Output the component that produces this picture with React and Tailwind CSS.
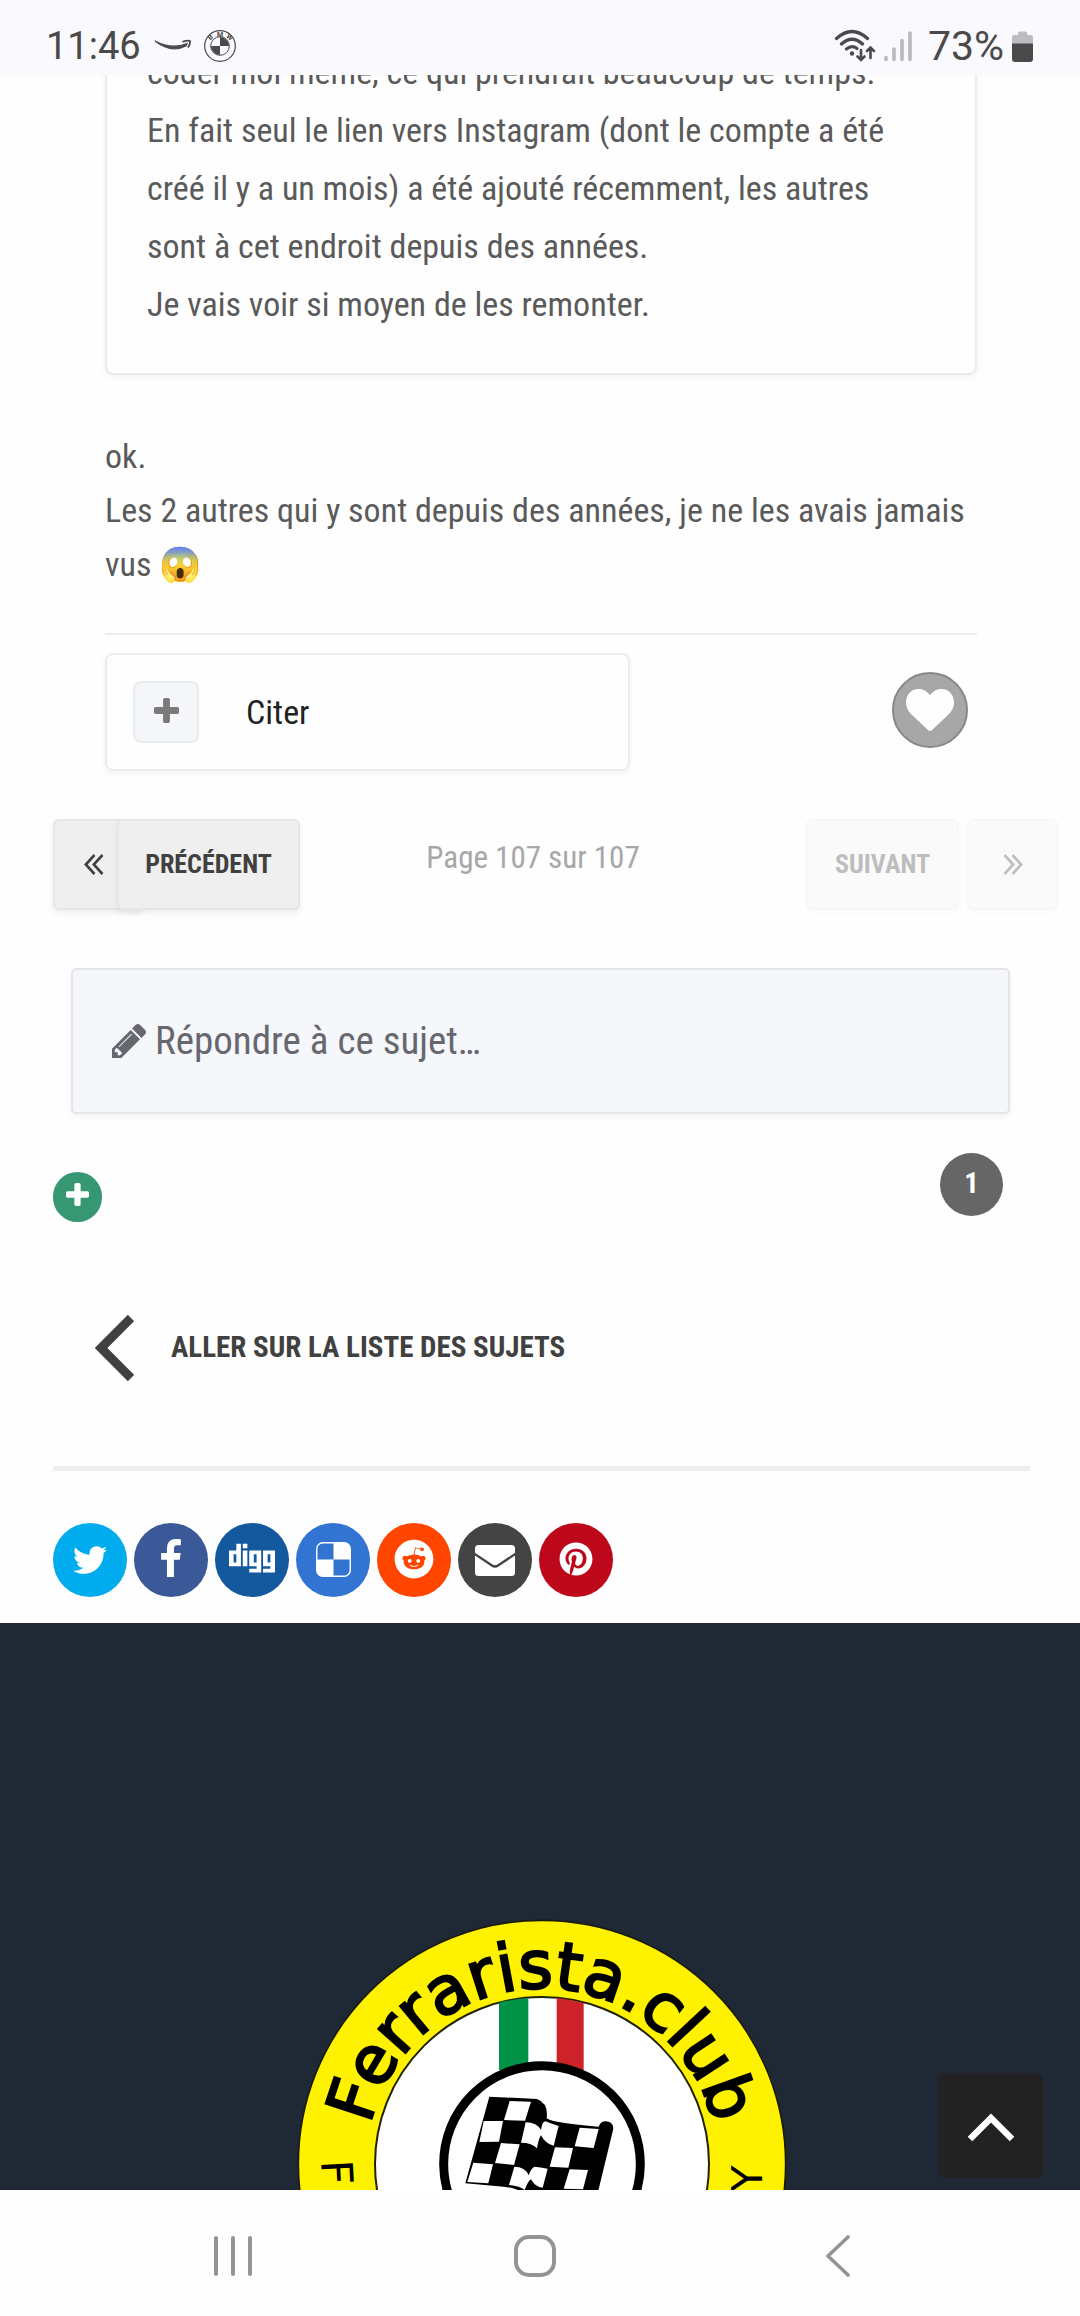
import { FaTwitter, FaDigg, FaReddit, FaPinterest } from "react-icons/fa";

const BODY = "font-['Roboto_Condensed',Roboto,sans-serif]";

function PlusIcon({ className }) {
  return (
    <svg viewBox="192 128 1408 1408" className={className} fill="currentColor" aria-hidden="true">
      <path d="M1600 736v192q0 40-28 68t-68 28h-416v416q0 40-28 68t-68 28h-192q-40 0-68-28t-28-68v-416h-416q-40 0-68-28t-28-68v-192q0-40 28-68t68-28h416v-416q0-40 28-68t68-28h192q40 0 68 28t28 68v416h416q40 0 68 28t28 68z" />
    </svg>
  );
}

function PencilIcon({ className }) {
  return (
    <svg viewBox="128 149 1515 1515" className={className} fill="currentColor" aria-hidden="true">
      <path d="M491 1536l91-91-235-235-91 91v107h128v128h107zm523-928q0-22-22-22-10 0-17 7l-542 542q-7 7-7 17 0 22 22 22 10 0 17-7l542-542q7-7 7-17zm-54-192l416 416-832 832h-416v-416zm683 96q0 53-37 90l-166 166-416-416 166-165q36-38 90-38 53 0 91 38l235 234q37 39 37 91z" />
    </svg>
  );
}

function DoubleChevron({ flip }) {
  return (
    <svg viewBox="0 0 20 21" className={flip ? "w-5 h-[21px] rotate-180" : "w-5 h-[21px]"} fill="none" stroke="currentColor" strokeWidth="2.6" aria-hidden="true">
      <path d="M10.5 1L1.8 10.500L10.5 20M18.500 1L9.800 10.500L18.500 20" />
    </svg>
  );
}

function StatusBar() {
  return (
    <header className="relative z-10 flex h-[75px] shrink-0 items-center justify-between bg-[#faf9fe] pt-[17px] pr-[47px] pl-[46px] font-[Roboto,sans-serif] leading-none text-[#4a4a4a]">
      <div className="flex items-center">
        <span className="text-[38px]">11:46</span>
        <svg viewBox="0 0 38 14" className="ml-[13px] h-[14px] w-[38px]" aria-hidden="true">
          <path d="M1 2Q18 11 33 4.500L32 7Q17 14.500 1 2z" fill="#4a4a4a" stroke="#4a4a4a" strokeWidth="1.200" />
          <path d="M28.500 2.800Q34 .8 36 2Q36.500 5 34 8.500" fill="none" stroke="#4a4a4a" strokeWidth="1.800" />
        </svg>
        <svg viewBox="0 0 34 34" className="ml-[11px] h-[34px] w-[34px]" aria-hidden="true">
          <circle cx="17" cy="17" r="15.300" fill="none" stroke="#4a4a4a" strokeWidth="1.200" />
          <circle cx="17" cy="17" r="9.300" fill="#faf9fe" stroke="#4a4a4a" strokeWidth="1" />
          <path d="M17 17V8a9 9 0 0 1 9 9zM17 17v9a9 9 0 0 1-9-9z" fill="#4a4a4a" />
          <g fill="#4a4a4a" fontSize="7" fontWeight="700" textAnchor="middle">
            <text x="17" y="7.500">M</text>
            <text transform="translate(9 10) rotate(-42)">B</text>
            <text transform="translate(25 10) rotate(42)">W</text>
          </g>
        </svg>
      </div>
      <div className="flex items-center">
        <svg viewBox="0 0 42 34" className="h-[34px] w-[42px]" fill="none" stroke="#4a4a4a" strokeWidth="3.200" strokeLinecap="round" aria-hidden="true">
          <path d="M2.500 9.500Q18 -4.500 33.500 9.500M7.500 15Q18 5.500 28.500 15M12.500 20Q18 15.500 23 19.500" />
          <circle cx="18" cy="24.500" r="2.200" fill="#4a4a4a" stroke="none" />
          <path d="M27 21v9.500M23.500 27.500L27 31l3.500-3.500M36.500 29V19M33 22l3.500-3.500L40 22" strokeWidth="2.600" />
        </svg>
        <svg viewBox="0 0 29 31" className="ml-[8px] h-[31px] w-[29px]" stroke="#b9b8bc" strokeWidth="3.600" strokeLinecap="round" aria-hidden="true">
          <path d="M2 26.500v2M10 18v10.500M18 9.500v19M26 2v26.500" />
        </svg>
        <span className="ml-[15px] text-[41px]">73%</span>
        <svg viewBox="0 0 21 31" className="ml-[8px] h-[31px] w-[21px]" aria-hidden="true">
          <path d="M6 2q0-1.500 1.500-1.500h6q1.500 0 1.500 1.500v2h4q2 0 2 2v7H0V6q0-2 2-2h4z" fill="#bdbcc1" />
          <path d="M0 12.500h21V28q0 3-3 3H3q-3 0-3-3z" fill="#4a4a4a" />
        </svg>
      </div>
    </header>
  );
}

function Post() {
  return (
    <article className="mr-[103px] ml-[105px]">
      <blockquote className="-mt-[34px] rounded-[8px] border-2 border-[#e8eded] pr-[40px] pb-[40px] pl-[40px] text-[34px] leading-[58px] text-[#5a5a5a] shadow-[0_2px_6px_rgba(0,0,0,0.05)]">
        coder moi même, ce qui prendrait beaucoup de temps.
        <br />
        En fait seul le lien vers Instagram (dont le compte a été créé il y a un mois) a été ajouté récemment, les autres sont à cet endroit depuis des années.
        <br />
        Je vais voir si moyen de les remonter.
      </blockquote>
      <p className="mt-[54px] text-[34px] leading-[54px] text-[#5a5a5a]">
        ok.
        <br />
        Les 2 autres qui y sont depuis des années, je ne les avais jamais vus 😱
      </p>
      <hr className="mt-[42px] border-t-2 border-[#ebebec]" />
      <div className="mt-[18px] flex items-center justify-between">
        <button type="button" className="flex h-[118px] w-[525px] items-center rounded-[8px] border-2 border-[#e8eded] pl-[26px] text-[34px] text-[#222] shadow-[0_2px_6px_rgba(0,0,0,0.05)]">
          <span className="mr-[47px] flex h-[62px] w-[66px] items-center justify-center rounded-[8px] border-2 border-[#e8eded] bg-[#f5f7fb] pb-1">
            <PlusIcon className="h-[25px] w-[25px] text-[#7b7b7b]" />
          </span>
          Citer
        </button>
        <button type="button" aria-label="J'aime" className="mr-[9px] mb-1 flex h-[76px] w-[76px] items-center justify-center rounded-full border-2 border-[#878787] bg-[#a7a7a7]">
          <svg viewBox="0 0 48 42" className="h-[42px] w-[48px]" aria-hidden="true">
            <path d="M24 6C20 1.500 16.500 0 12.500 0C5 0 0 6 0 13.500C0 19 3 23 6 26L22.500 41.500q1.500 1 3 0L42 26C45 23 48 19 48 13.500C48 6 43 0 35.500 0C31.500 0 28 1.500 24 6z" fill="#fefefe" />
          </svg>
        </button>
      </div>
    </article>
  );
}

function Pager() {
  return (
    <nav aria-label="Pagination" className="mt-[48px] mr-[22px] ml-[53px] flex text-[26px] font-bold">
      <button type="button" aria-label="Première page" className="flex h-[91px] w-[91px] items-center justify-center rounded-[6px] border-2 border-[#e4e6ec] bg-[#efefef] pr-[10px] text-[#404040] shadow-[0_3px_6px_rgba(0,0,0,0.07)]">
        <DoubleChevron />
      </button>
      <button type="button" className="relative -ml-[27px] h-[91px] w-[183px] rounded-[6px] border-2 border-[#e4e6ec] bg-[#efefef] text-[#404040] shadow-[0_3px_6px_rgba(0,0,0,0.07)]">
        PRÉCÉDENT
      </button>
      <p className="flex-1 pt-[18px] pr-[40px] text-center text-[31px] leading-[42px] font-normal text-[#a7a7a9]">Page 107 sur 107</p>
      <button type="button" disabled className="h-[91px] w-[153px] rounded-[6px] border-2 border-[#f6f7fa] bg-[#fafafa] text-[#bdbdbd] shadow-[0_3px_6px_rgba(0,0,0,0.02)]">
        SUIVANT
      </button>
      <button type="button" disabled aria-label="Dernière page" className="ml-[8px] flex h-[91px] w-[91px] items-center justify-center rounded-[6px] border-2 border-[#f6f7fa] bg-[#fafafa] text-[#bdbdbd] shadow-[0_3px_6px_rgba(0,0,0,0.02)]">
        <DoubleChevron flip />
      </button>
    </nav>
  );
}

const SHARE = [
  { name: "Twitter", bg: "bg-[#00acee]", icon: <FaTwitter className="h-[34px] w-[34px]" /> },
  {
    name: "Facebook",
    bg: "bg-[#3b5998]",
    icon: (
      <svg viewBox="479 0 864 1664" className="mb-1 h-[38px] w-[20px]" fill="currentColor">
        <path d="M1343 12v264h-157q-86 0-116 36t-30 108v189h293l-39 296h-254v759h-306v-759h-255v-296h255v-218q0-186 104-288.500t277-102.500q147 0 228 12z" />
      </svg>
    ),
  },
  { name: "Digg", bg: "bg-[#14589e]", icon: <FaDigg className="mb-1 h-[46px] w-[46px]" /> },
  {
    name: "Delicious",
    bg: "bg-[#3274d1]",
    icon: (
      <svg viewBox="0 0 34 34" className="mb-[2px] h-[35px] w-[35px]" fill="none">
        <rect x=".7" y=".7" width="32.600" height="32.600" rx="6" stroke="currentColor" strokeWidth="1.400" />
        <path d="M17 1h10q6 0 6 6v10H17zM17 33H7q-6 0-6-6V17h16z" fill="currentColor" />
      </svg>
    ),
  },
  { name: "Reddit", bg: "bg-[#ff4500]", icon: <FaReddit className="mb-[2px] h-[40px] w-[40px]" /> },
  {
    name: "E-mail",
    bg: "bg-[#444444]",
    icon: (
      <svg viewBox="0 0 40 31" className="h-[31px] w-[40px]">
        <rect width="40" height="31" rx="3.500" fill="currentColor" />
        <path d="M-1 8.500L17 20.500q3 2 6 0L41 8.500" fill="none" stroke="#444444" strokeWidth="2.400" />
      </svg>
    ),
  },
  { name: "Pinterest", bg: "bg-[#bd081c]", icon: <FaPinterest className="mb-[2px] h-[34px] w-[34px]" /> },
];

function ClubLogo() {
  return (
    <svg viewBox="20 57 1470 813" className="ml-[3px] h-[271px] w-[490px] shrink-0" role="img" aria-label="Ferrarista.club">
      <defs>
        <path id="logo-arc" d="M227 792a528 528 0 0 1 1056 0" />
      </defs>
      <circle cx="755" cy="792" r="731" fill="#fff200" stroke="#1c1c08" strokeWidth="5" />
      <circle cx="755" cy="792" r="501" fill="#fff" stroke="#222208" strokeWidth="6" />
      <path d="M626 308Q670 297 714 294V510H626z" fill="#009246" />
      <path d="M799 294Q840 298 880 309V510H799z" fill="#ce2229" />
      <circle cx="755" cy="792" r="295" fill="#fff" stroke="#000" strokeWidth="27" />
      <path d="M597 590L740 597Q775 610 769 655Q790 670 925 680Q932 660 955 665Q972 672 968 690L922 880H690Q690 866 640 860L525 850z" fill="#000" />
      <g fill="#fff">
        <path d="M658 603L722 605L704 662L641 660z" />
        <path d="M580 663L638 663L626 725L567 726z" />
        <path d="M706 667Q740 668 752 690Q755 665 765 664Q785 672 805 678L790 737Q765 732 752 706Q745 715 740 745Q725 728 692 728z" />
        <path d="M868 683L925 687L910 744L853 739z" />
        <path d="M632 729L688 733L671 795L614 789z" />
        <path d="M794 742L848 744L834 803L778 800z" />
        <path d="M549 788L608 793L594 850L531 846z" />
        <path d="M672 800Q705 800 715 826Q722 805 732 800Q750 802 772 806L757 863Q735 862 722 838Q712 845 703 870Q690 858 656 855z" />
        <path d="M838 808L893 810L878 868L820 866z" />
      </g>
      <text fontFamily="'DejaVu Sans', sans-serif" fontSize="198" fill="#000" stroke="#000" strokeWidth="7" textAnchor="middle">
        <textPath href="#logo-arc" startOffset="50%">Ferrarista.club</textPath>
      </text>
      <g fontFamily="'DejaVu Sans', sans-serif" fontSize="130" fill="#000">
        <text transform="translate(92 782) rotate(87)">F</text>
        <text transform="translate(1415 875) rotate(-90)">Y</text>
      </g>
    </svg>
  );
}

function SiteFooter() {
  return (
    <footer className="relative flex h-[567px] items-end justify-center overflow-hidden bg-[#1e2935]">
      <ClubLogo />
      <button type="button" aria-label="Haut de page" className="absolute right-[37px] bottom-[12px] flex h-[105px] w-[105px] items-center justify-center rounded-[7px] bg-[#222222] pt-1">
        <svg viewBox="0 0 48 29" className="h-[29px] w-[48px]" fill="none" stroke="#fff" strokeWidth="6.500" strokeLinejoin="miter" aria-hidden="true">
          <path d="M3 26L24 5L45 26" />
        </svg>
      </button>
    </footer>
  );
}

function SystemNav() {
  return (
    <nav aria-label="Système" className="flex h-[126px] shrink-0 items-center justify-between bg-[#fefefe] pt-[6px] pr-[229px] pl-[213px] text-[#949494]">
      <button type="button" aria-label="Applications récentes">
        <svg viewBox="0 0 40 42" className="h-[42px] w-[40px]" stroke="currentColor" strokeWidth="4" strokeLinecap="round">
          <path d="M3 3v36M20 3v36M37 3v36" />
        </svg>
      </button>
      <button type="button" aria-label="Accueil" className="mr-[8px]">
        <svg viewBox="0 0 42 42" className="h-[42px] w-[42px]" fill="none" stroke="currentColor" strokeWidth="4">
          <rect x="2" y="2" width="38" height="38" rx="13" />
        </svg>
      </button>
      <button type="button" aria-label="Retour">
        <svg viewBox="0 0 26 42" className="h-[42px] w-[26px]" fill="none" stroke="currentColor" strokeWidth="3.600" strokeLinecap="round" strokeLinejoin="round">
          <path d="M23 2L3 21L23 40" />
        </svg>
      </button>
    </nav>
  );
}

export default function App() {
  return (
    <div className={`flex min-h-screen flex-col overflow-x-hidden bg-[#fefefe] ${BODY}`}>
      <StatusBar />
      <main className="grow">
        <Post />
        <Pager />
        <button type="button" className="mt-[58px] mr-[70px] ml-[71px] flex h-[146px] w-[calc(100%-141px)] items-center rounded-[5px] border-2 border-[#e3e5ea] bg-[#f5f7fb] pl-[39px] text-[39px] text-[#67686f] shadow-[0_3px_6px_rgba(0,0,0,0.04)]">
          <PencilIcon className="mr-[9px] h-[34px] w-[34px]" />
          Répondre à ce sujet…
        </button>
        <div className="mt-[39px] mr-[77px] ml-[53px] flex items-end justify-between">
          <button type="button" aria-label="Ajouter" className="flex h-[50px] w-[49px] items-center justify-center rounded-full bg-[#369872] pb-[6px]">
            <PlusIcon className="h-[23px] w-[23px] text-white" />
          </button>
          <span className="mb-[6px] flex h-[63px] w-[63px] items-center justify-center rounded-full bg-[#666666] pb-[2px] text-[29px] leading-none font-bold text-white">1</span>
        </div>
        <a href="#sujets" className="mt-[93px] ml-[95px] flex h-[66px] items-center text-[29px] font-bold text-[#404040]">
          <svg viewBox="0 0 39 66" className="mr-[37px] h-[66px] w-[39px]" fill="none" stroke="currentColor" strokeWidth="9" strokeLinejoin="miter" aria-hidden="true">
            <path d="M36 3L6 33L36 63" />
          </svg>
          ALLER SUR LA LISTE DES SUJETS
        </a>
        <hr className="mt-[85px] mr-[50px] ml-[53px] border-t-[5px] border-[#eeeeee]" />
        <ul className="mt-[52px] mb-[26px] ml-[53px] flex gap-[7px]">
          {SHARE.map((s) => (
            <li key={s.name}>
              <a href="#partager" aria-label={s.name} className={`flex h-[74px] w-[74px] items-center justify-center rounded-full text-white ${s.bg}`}>
                {s.icon}
              </a>
            </li>
          ))}
        </ul>
      </main>
      <SiteFooter />
      <SystemNav />
    </div>
  );
}
